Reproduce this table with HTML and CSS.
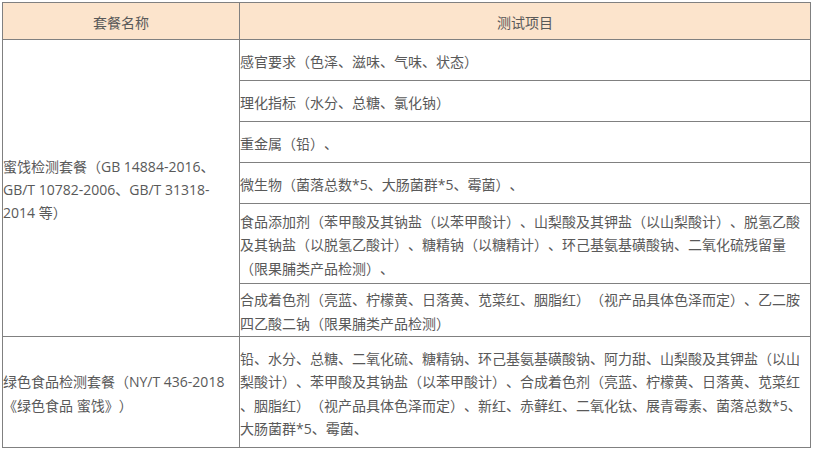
FILE: index.html
```html
<!DOCTYPE html>
<html lang="zh-CN">
<head>
<meta charset="utf-8">
<link rel="stylesheet" href="styles.css">
</head>
<body>
<table class="pkg">
  <colgroup><col class="c-name"><col class="c-items"></colgroup>
  <tr class="r-head">
    <th>套餐名称</th>
    <th>测试项目</th>
  </tr>
  <tr class="r-41">
    <td class="name" rowspan="6">蜜饯检测套餐（GB 14884-2016、GB/T 10782-2006、GB/T 31318-2014 等）</td>
    <td class="item">感官要求（色泽、滋味、气味、状态）</td>
  </tr>
  <tr class="r-41"><td class="item">理化指标（水分、总糖、氯化钠）</td></tr>
  <tr class="r-41"><td class="item">重金属（铅）、</td></tr>
  <tr class="r-41"><td class="item">微生物（菌落总数*5、大肠菌群*5、霉菌）、</td></tr>
  <tr class="r-80"><td class="item">食品添加剂（苯甲酸及其钠盐（以苯甲酸计）、山梨酸及其钾盐（以山梨酸计）、脱氢乙酸及其钠盐（以脱氢乙酸计）、糖精钠（以糖精计）、环己基氨基磺酸钠、二氧化硫残留量（限果脯类产品检测）、</td></tr>
  <tr class="r-53"><td class="item">合成着色剂（亮蓝、柠檬黄、日落黄、苋菜红、胭脂红）（视产品具体色泽而定）、乙二胺四乙酸二钠（限果脯类产品检测）</td></tr>
  <tr class="r-111">
    <td class="name">绿色食品检测套餐（NY/T 436-2018《绿色食品 蜜饯》）</td>
    <td class="item loose">铅、水分、总糖、二氧化硫、糖精钠、环己基氨基磺酸钠、阿力甜、山梨酸及其钾盐（以山梨酸计）、苯甲酸及其钠盐（以苯甲酸计）、合成着色剂（亮蓝、柠檬黄、日落黄、苋菜红、胭脂红）（视产品具体色泽而定）、新红、赤藓红、二氧化钛、展青霉素、菌落总数*5、大肠菌群*5、霉菌、</td>
  </tr>
</table>
</body>
</html>
```
FILE: styles.css
```css
html, body {
  margin: 0;
  padding: 0;
  background: #ffffff;
}
body {
  padding: 2px 0 0 2px;
  font-family: "Microsoft YaHei", "Open Sans", "Noto Sans CJK SC", sans-serif;
  font-size: 14px;
  color: #595959;
  text-spacing-trim: space-all;
}
.pkg {
  border-collapse: collapse;
  table-layout: fixed;
  width: 808px;
}
.c-name { width: 237px; }
.c-items { width: 571px; }
.pkg th, .pkg td {
  border: 1px solid #808080;
  vertical-align: middle;
  line-height: 23.33px;
  padding: 3px 0 0 0;
}
.pkg th {
  background: #fce4cc;
  font-weight: normal;
  text-align: center;
}
.name { padding-left: 3px; padding-right: 2px; }
.item { padding-left: 1px; padding-right: 1px; }
.loose { line-break: anywhere; }
.r-head { height: 37px; }
.r-41 { height: 41px; }
.r-80 { height: 80px; }
.r-53 { height: 53px; }
.r-111 { height: 111px; }
```
